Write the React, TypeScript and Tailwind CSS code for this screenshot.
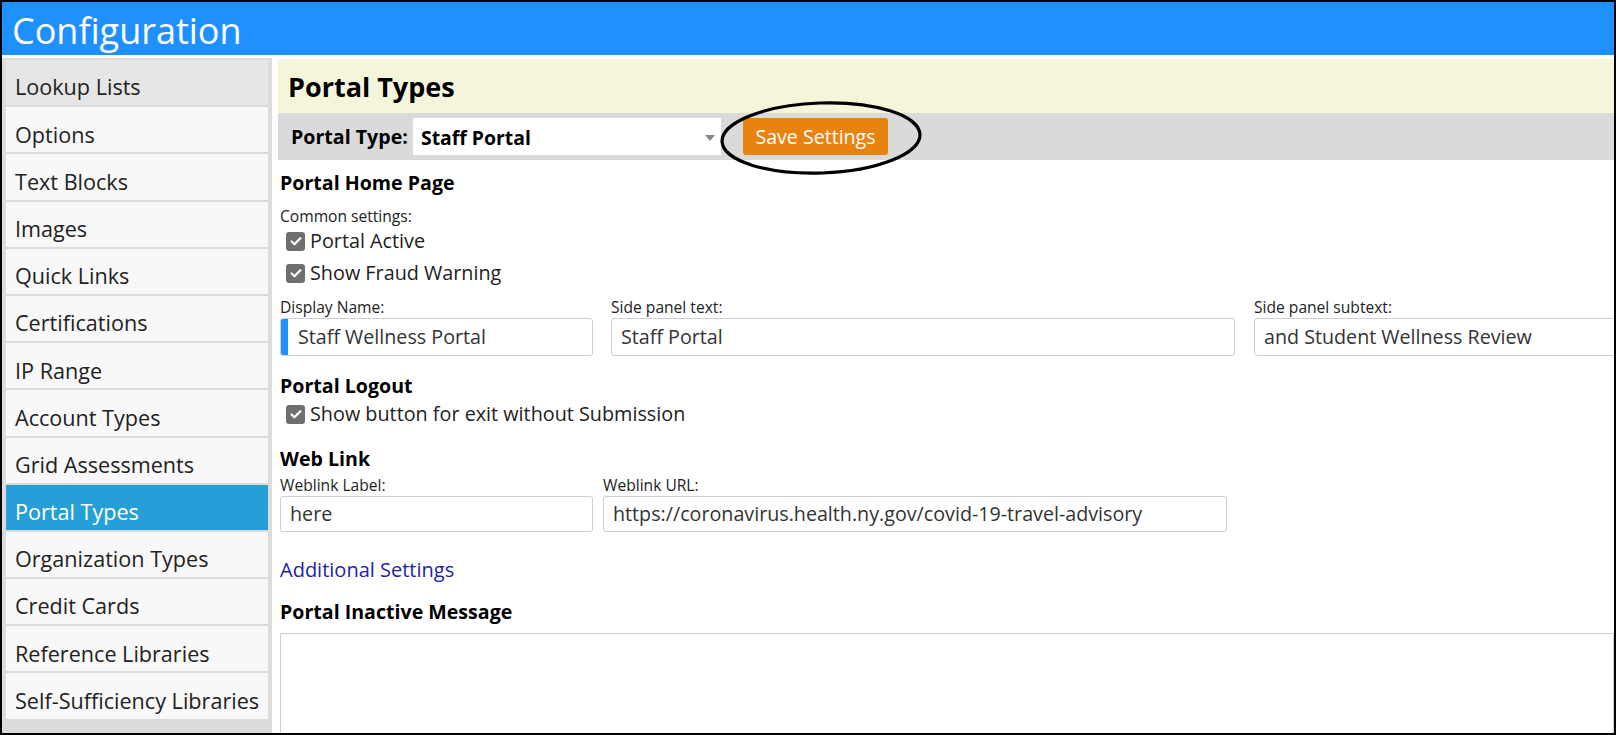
import React from "react";

const menu = [
  "Lookup Lists",
  "Options",
  "Text Blocks",
  "Images",
  "Quick Links",
  "Certifications",
  "IP Range",
  "Account Types",
  "Grid Assessments",
  "Portal Types",
  "Organization Types",
  "Credit Cards",
  "Reference Libraries",
  "Self-Sufficiency Libraries",
];

const font = { fontFamily: "'Open Sans', 'Noto Sans', sans-serif" };

function Check({ label }: { label: string }) {
  return (
    <div className="flex h-[32px] shrink-0 items-center pl-[6px]">
      <span className="flex h-[19px] w-[19px] items-center justify-center rounded-[3px] bg-[#6f6f6f]">
        <svg width="14" height="14" viewBox="0 0 16 16">
          <path d="M3 8.5l3.2 3.2L13 4.8" fill="none" stroke="#fff" strokeWidth="2.6" strokeLinecap="round" strokeLinejoin="round" />
        </svg>
      </span>
      <span className="ml-[5px] text-[19.8px] leading-[24px] text-[#222]">{label}</span>
    </div>
  );
}

function Field({
  label,
  value,
  width,
  height,
  accent,
}: {
  label: string;
  value: string;
  width: string;
  height: string;
  accent?: boolean;
}) {
  return (
    <div className={`flex shrink-0 flex-col ${width}`}>
      <div className="h-[22px] whitespace-nowrap text-[15.6px] leading-[22px] text-[#222]">{label}</div>
      <div className={`relative flex ${height} items-center overflow-hidden rounded-[3px] border border-[#cfcfcf] bg-white pl-[9px] text-[19.7px] text-[#333]`}>
        {accent && <span className="absolute left-0 top-0 h-full w-[7px] bg-[#1e90ff]" />}
        <span className={`whitespace-nowrap ${accent ? "pl-[8px]" : ""}`}>{value}</span>
      </div>
    </div>
  );
}

function Heading({ children, mt }: { children: React.ReactNode; mt: string }) {
  return <div className={`${mt} h-[24px] shrink-0 whitespace-nowrap text-[19.6px] font-bold leading-[24px] text-black`}>{children}</div>;
}

export default function App() {
  return (
    <div style={font} className="relative flex h-[735px] w-[1616px] flex-col overflow-hidden border-2 border-black bg-white">
      <header className="flex h-[53px] shrink-0 items-center bg-[#1e90ff] pl-[10px] pt-[4px]">
        <h1 className="text-[36px] leading-none text-white">Configuration</h1>
      </header>
      <div className="mt-[3px] flex min-h-0 flex-1">
        <nav className="flex w-[270px] shrink-0 flex-col gap-[2px] bg-[#dcdcdc] p-[4px] pt-[2px]">
          {menu.map((m, i) => (
            <div
              key={m}
              className={`flex h-[45.2px] shrink-0 items-center whitespace-nowrap pl-[9px] pt-[10px] text-[21.6px] ${
                m === "Portal Types"
                  ? "bg-[#269fd8] text-white"
                  : i === 0
                  ? "bg-[#e6e6e6] text-[#222]"
                  : "bg-[#f8f8f8] text-[#222]"
              }`}
            >
              {m}
            </div>
          ))}
        </nav>
        <main className="ml-[6px] flex min-w-0 flex-1 flex-col">
          <div className="mt-[1px] flex h-[54px] shrink-0 items-center bg-[#f5f5dc] pl-[10px] pt-[2px]">
            <h2 className="text-[27px] font-bold text-black">Portal Types</h2>
          </div>
          <div className="flex h-[47px] shrink-0 items-center bg-[#dadada]">
            <span className="w-[135px] shrink-0 pl-[13px] text-[19.6px] font-bold text-black">Portal Type:</span>
            <div className="flex h-[37px] w-[308px] shrink-0 items-center justify-between bg-white pl-[8px] pr-[6px] pt-[2px]">
              <span className="text-[19.4px] font-bold text-black">Staff Portal</span>
              <svg width="10" height="6" viewBox="0 0 10 6">
                <path d="M0 0h10L5 6z" fill="#888" />
              </svg>
            </div>
            <button className="ml-[22px] flex h-[37px] w-[145px] shrink-0 items-center justify-center rounded-[3px] bg-[#e8830f] text-[19.6px] text-white">
              Save Settings
            </button>
          </div>

          <div className="flex flex-col pl-[2px]">
            <Heading mt="mt-[11px]">Portal Home Page</Heading>
            <div className="mt-[12px] h-[18px] shrink-0 text-[15.6px] leading-[18px] text-[#222]">Common settings:</div>
            <Check label="Portal Active" />
            <Check label="Show Fraud Warning" />
            <div className="mt-[7px] flex">
              <Field label="Display Name:" value="Staff Wellness Portal" width="w-[313px]" height="h-[38px]" accent />
              <div className="w-[18px] shrink-0" />
              <Field label="Side panel text:" value="Staff Portal" width="w-[624px]" height="h-[38px]" />
              <div className="w-[19px] shrink-0" />
              <Field label="Side panel subtext:" value="and Student Wellness Review" width="w-[380px]" height="h-[38px]" />
            </div>
            <Heading mt="mt-[18px]">Portal Logout</Heading>
            <Check label="Show button for exit without Submission" />
            <Heading mt="mt-[17px]">Web Link</Heading>
            <div className="mt-[3px] flex gap-[10px]">
              <Field label="Weblink Label:" value="here" width="w-[313px]" height="h-[36px]" />
              <Field label="Weblink URL:" value="https://coronavirus.health.ny.gov/covid-19-travel-advisory" width="w-[624px]" height="h-[36px]" />
            </div>
            <a className="mt-[26px] h-[24px] shrink-0 text-[20px] leading-[24px] text-[#2323a8]">Additional Settings</a>
            <Heading mt="mt-[18px]">Portal Inactive Message</Heading>
            <div className="mt-[9px] h-[120px] shrink-0 border border-[#cfcfcf] bg-white" />
          </div>
        </main>
      </div>
      <svg className="pointer-events-none absolute left-[716px] top-[97px]" width="206" height="78" viewBox="0 0 206 78">
        <ellipse cx="103" cy="39" rx="99" ry="35" fill="none" stroke="#000" strokeWidth="3.2" transform="rotate(-2 103 39)" />
      </svg>
    </div>
  );
}
